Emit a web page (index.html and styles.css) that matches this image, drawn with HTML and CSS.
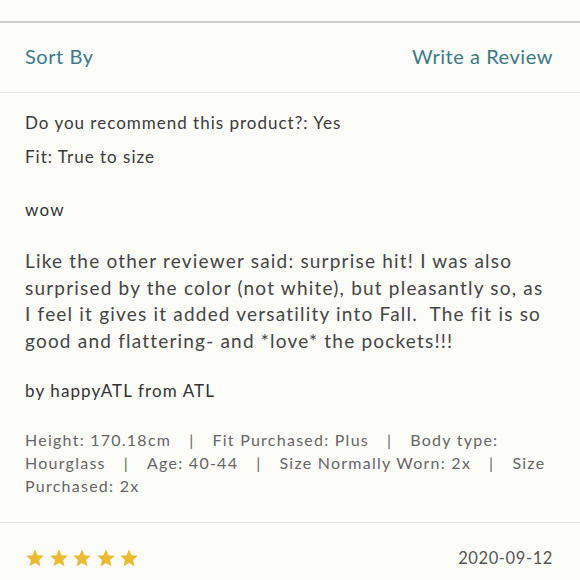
FILE: index.html
```html
<!DOCTYPE html>
<html>
<head>
<meta charset="utf-8">
<link rel="stylesheet" href="styles.css">
</head>
<body>
<div class="page">
  <div class="topgap"></div>
  <div class="toolbar">
    <span class="link">Sort By</span>
    <span class="link">Write a Review</span>
  </div>
  <div class="review">
    <p class="meta">Do you recommend this product?: Yes</p>
    <p class="meta fit">Fit: True to size</p>
    <p class="title">wow</p>
    <p class="body">Like the other reviewer said: surprise hit! I was also surprised by the color (not white), but pleasantly so, as I feel it gives it added versatility into Fall.&nbsp; The fit is so good and flattering- and *love* the pockets!!!</p>
    <p class="author">by happyATL from ATL</p>
    <p class="details">Height: 170.18cm<span class="sep">|</span>Fit Purchased: Plus<span class="sep">|</span>Body type: Hourglass<span class="sep">|</span>Age: 40-44<span class="sep">|</span>Size Normally Worn: 2x<span class="sep">|</span>Size Purchased: 2x</p>
  </div>
  <div class="footer">
    <div class="stars">
      <svg viewBox="0 0 24 24" class="star"><path d="M12 1.8l3.05 6.9 7.5.7-5.68 5 1.68 7.35L12 17.9l-6.55 3.85 1.68-7.35-5.68-5 7.5-.7z"/></svg>
      <svg viewBox="0 0 24 24" class="star"><path d="M12 1.8l3.05 6.9 7.5.7-5.68 5 1.68 7.35L12 17.9l-6.55 3.85 1.68-7.35-5.68-5 7.5-.7z"/></svg>
      <svg viewBox="0 0 24 24" class="star"><path d="M12 1.8l3.05 6.9 7.5.7-5.68 5 1.68 7.35L12 17.9l-6.55 3.85 1.68-7.35-5.68-5 7.5-.7z"/></svg>
      <svg viewBox="0 0 24 24" class="star"><path d="M12 1.8l3.05 6.9 7.5.7-5.68 5 1.68 7.35L12 17.9l-6.55 3.85 1.68-7.35-5.68-5 7.5-.7z"/></svg>
      <svg viewBox="0 0 24 24" class="star"><path d="M12 1.8l3.05 6.9 7.5.7-5.68 5 1.68 7.35L12 17.9l-6.55 3.85 1.68-7.35-5.68-5 7.5-.7z"/></svg>
    </div>
    <span class="date">2020-09-12</span>
  </div>
</div>
</body>
</html>
```

FILE: styles.css
```css
* { box-sizing: border-box; }
html, body { margin: 0; padding: 0; }
body {
  background: #fcfcf9;
  font-family: Lato, "Open Sans", sans-serif;
  color: #3c3c3c;
  width: 580px;
  height: 580px;
  overflow: hidden;
}
.page { width: 580px; }
.topgap {
  height: 23px;
  background: #fdfdfb;
  border-bottom: 2px solid #cfcfcf;
}
.toolbar {
  height: 70px;
  display: flex;
  justify-content: space-between;
  align-items: center;
  padding: 0 27px 3px 25px;
  border-bottom: 1px solid #e3e3e0;
}
.link {
  color: #3b7a86;
  font-size: 20px;
  letter-spacing: 0.55px;
}
.review { padding: 0 25px; }
.review p { margin: 0; }
.meta {
  font-size: 17px;
  letter-spacing: 1px;
  line-height: 20px;
  margin-top: 20px !important;
  color: #3a3a3a;
}
.meta.fit { margin-top: 14px !important; }
.title {
  font-size: 17px;
  letter-spacing: 1.3px;
  margin-top: 33px !important;
  line-height: 20px;
  color: #333;
}
.body {
  font-size: 19px;
  line-height: 26.5px;
  letter-spacing: 1.2px;
  margin-top: 28px !important;
  color: #454545;
}
.author {
  font-size: 17px;
  letter-spacing: 1.1px;
  line-height: 20px;
  margin-top: 27px !important;
  color: #333;
}
.details {
  font-size: 16px;
  line-height: 23px;
  letter-spacing: 1.25px;
  margin-top: 27px !important;
  color: #666;
}
.sep { margin: 0 18px; }
.footer {
  margin-top: 25px;
  border-top: 1px solid #e3e3e0;
  display: flex;
  justify-content: space-between;
  align-items: center;
  padding: 25px 27px 0 25px;
}
.stars { display: flex; gap: 3.5px; }
.star { width: 20px; height: 20px; fill: #ebbb33; }
.date {
  font-size: 16.5px;
  letter-spacing: 0.6px;
  color: #555;
}
```
